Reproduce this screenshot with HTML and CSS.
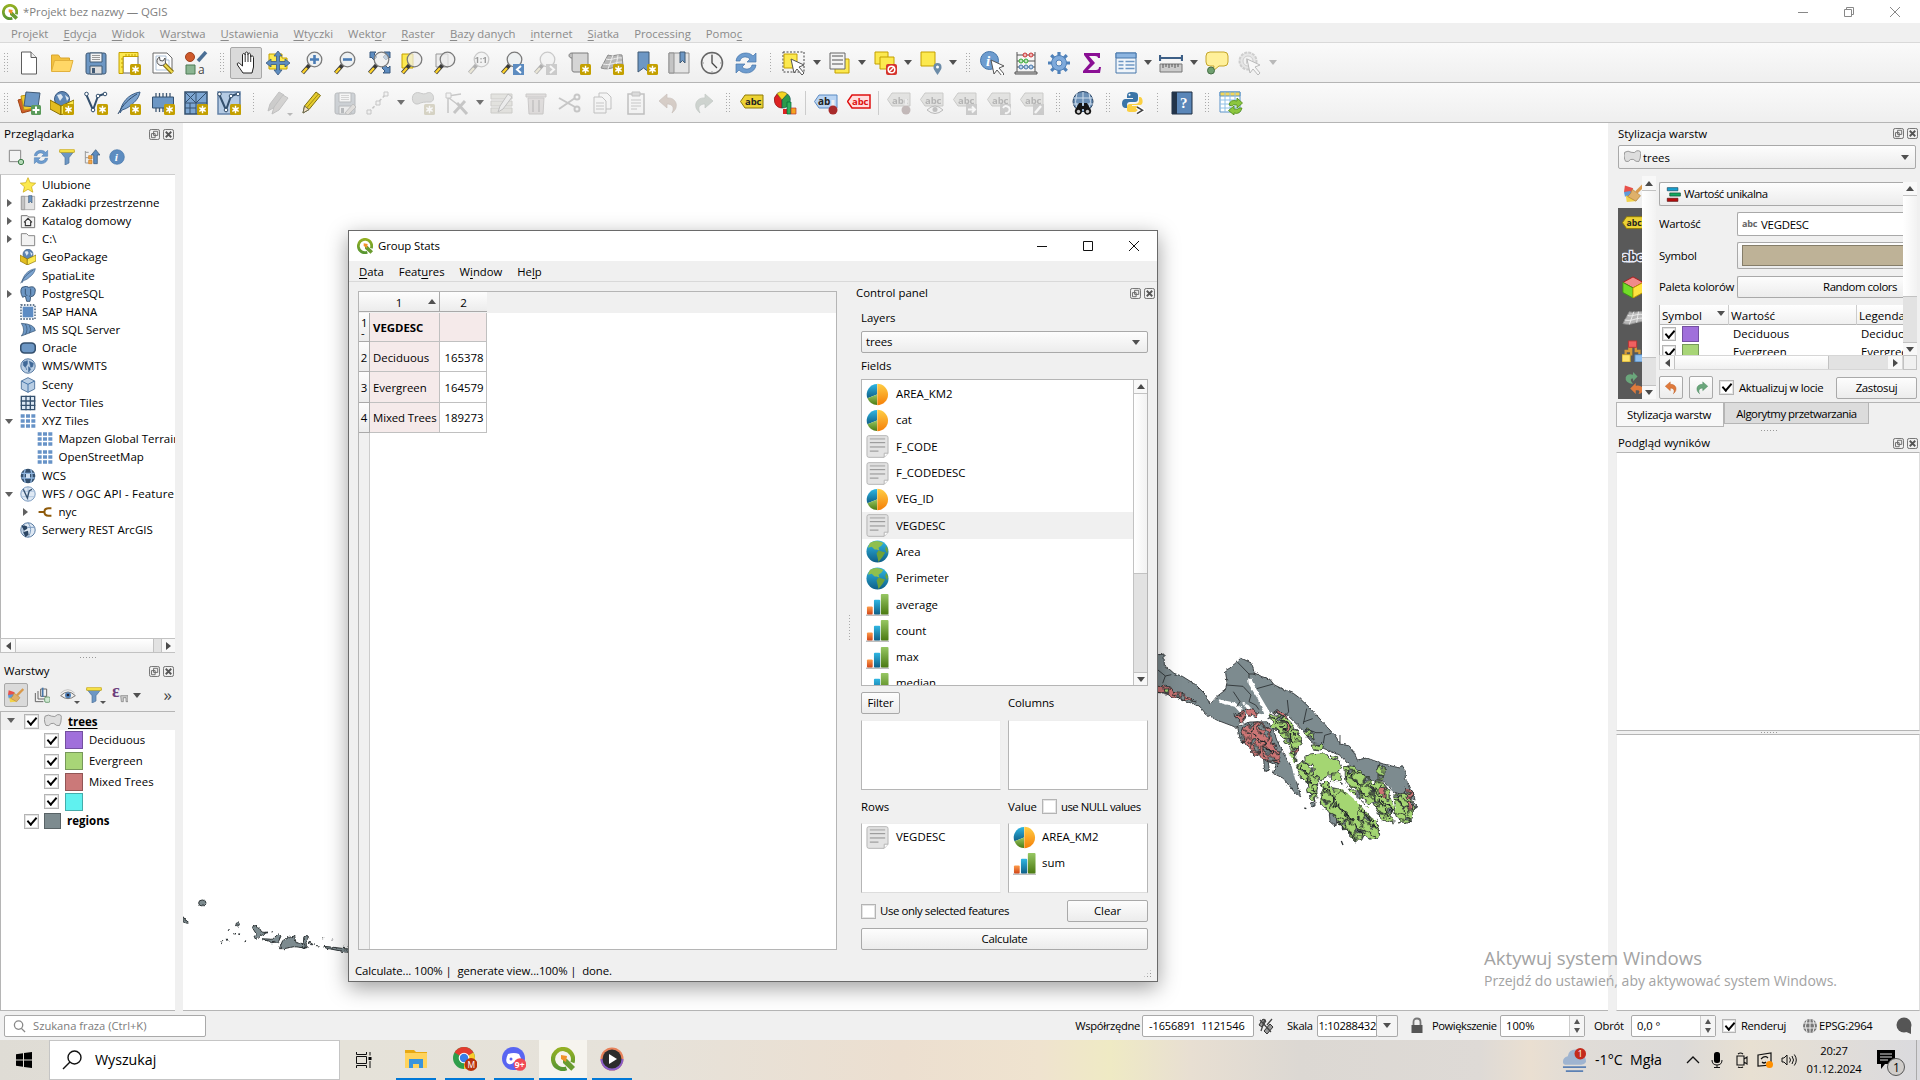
FILE: index.html
```html
<!DOCTYPE html>
<html lang="pl">
<head>
<meta charset="utf-8">
<title>*Projekt bez nazwy — QGIS</title>
<link rel="stylesheet" href="styles.css">
</head>
<body>
<svg class="defs" aria-hidden="true">
<defs>
<linearGradient id="gOr" x1="0" y1="0" x2="0" y2="1"><stop offset="0" stop-color="#ffce45"/><stop offset="1" stop-color="#f57f08"/></linearGradient>
<linearGradient id="gBl" x1="0" y1="0" x2="0" y2="1"><stop offset="0" stop-color="#2fb7e4"/><stop offset="1" stop-color="#0f5f87"/></linearGradient>
<linearGradient id="gGr" x1="0" y1="0" x2="0" y2="1"><stop offset="0" stop-color="#97c763"/><stop offset="1" stop-color="#4b7a12"/></linearGradient>
<linearGradient id="gRd" x1="0" y1="0" x2="0" y2="1"><stop offset="0" stop-color="#ff9d4a"/><stop offset="1" stop-color="#cf4418"/></linearGradient>
<linearGradient id="gQ" x1="0" y1="0" x2="0" y2="1"><stop offset="0" stop-color="#93b023"/><stop offset="1" stop-color="#589632"/></linearGradient>
<filter id="ragged" x="-5%" y="-5%" width="110%" height="110%"><feTurbulence type="fractalNoise" baseFrequency="0.1" numOctaves="2" seed="4"/><feDisplacementMap in="SourceGraphic" scale="10" xChannelSelector="R" yChannelSelector="G"/></filter>
<filter id="ragged2" x="-5%" y="-5%" width="110%" height="110%"><feTurbulence type="fractalNoise" baseFrequency="0.045" numOctaves="2" seed="9"/><feDisplacementMap in="SourceGraphic" scale="30" xChannelSelector="R" yChannelSelector="G"/></filter>
<pattern id="woods" width="46" height="42" patternUnits="userSpaceOnUse" patternTransform="rotate(28) scale(1.15)"><path d="M0 0h46v42H0z" fill="#a4d672"/><path d="M0 10l14-4 8 8 10-6 14 4M22 14l-3 14 9 14M0 30l19-2M33 8l3 18 10 6M36 26l-10 4" fill="none" stroke="#262c2c" stroke-width="3"/><path d="M20 14l9-2 2 7-8 3zM2 31l9 0-3 8z" fill="#7d8b8f" stroke="#262c2c" stroke-width="2"/></pattern>
<pattern id="mixed" width="42" height="38" patternUnits="userSpaceOnUse" patternTransform="rotate(35) scale(1.3)"><path d="M0 0h42v38H0z" fill="#cc7574"/><path d="M0 10l18-3 8 8 16-5M20 14l-2 24M26 15l4 14 12 2" fill="none" stroke="#262c2c" stroke-width="2.300"/><path d="M0 20l14 0 3 10-12 4zM26 15l12-3 0 10-8 2z" fill="#7d8b8f" stroke="#262c2c" stroke-width="2"/></pattern>
</defs>
</svg>
<svg class="symbols" aria-hidden="true">
<symbol id="badge" viewBox="0 0 24 24"><rect x="13" y="13" width="11" height="11" rx="1.5" fill="#c4a000"/><path d="M18.5 14.800v7.400M15.300 16.600l6.400 3.800M21.700 16.600l-6.400 3.800" stroke="#fff" stroke-width="1.400"/><circle cx="18.500" cy="18.500" r="1.900" fill="#fff"/></symbol>
<symbol id="mag" viewBox="0 0 24 24"><path d="M9.500 14L2.500 22" stroke="#3a3a3a" stroke-width="4"/><path d="M7 17L2.700 21.800" stroke="#fcd22b" stroke-width="2.400"/><circle cx="14.500" cy="8.500" r="7.300" fill="#eef1f2" stroke="#7b7b7b" stroke-width="1.300"/></symbol>
<symbol id="magc" viewBox="0 0 24 24"><path d="M9.500 14L2.500 22" stroke="#3a3a3a" stroke-width="4"/><path d="M7 17L2.700 21.800" stroke="#fcd22b" stroke-width="2.400"/><circle cx="14.500" cy="8.500" r="7.300" fill="#eee" fill-opacity=".7" stroke="#7b7b7b" stroke-width="1.300"/></symbol>
<symbol id="q" viewBox="0 0 24 24"><path d="M21.400 15.500A10 10 0 1 0 15.500 21.400" fill="none" stroke="url(#gQ)" stroke-width="4.200"/><path d="M12 12h4l8 8-3.700 3.700L12 16z" fill="#6a9c30"/><path d="M10 8l6 1-1 6-5-3z" fill="#f0932b"/></symbol>
<symbol id="new" viewBox="0 0 24 24"><path d="M4.500 1h9.500l5.500 5.500V23h-15z" fill="#fff" stroke="#5d5d5d"/><path d="M14 1v5.500h5.500" fill="#eee" stroke="#5d5d5d"/></symbol>
<symbol id="open" viewBox="0 0 24 24"><path d="M1.500 4h7l2 3h9v4H5L1.500 20z" fill="#f3c13e" stroke="#d9a52c"/><path d="M4.500 9.500h18.500l-3 11H1.500z" fill="#ffd766" stroke="#e2b13c"/></symbol>
<symbol id="save" viewBox="0 0 24 24"><rect x="2" y="2" width="20" height="21" rx="2" fill="#6d97c4" stroke="#415a75"/><path d="M6 2h12v9H6z" fill="#f4f4f4" stroke="#415a75"/><path d="M8 4.500h8M8 6.500h8M8 8.500h8" stroke="#999"/><path d="M6 15h12v8H6z" fill="#ddd" stroke="#415a75"/><path d="M8 17h3v5H8z" fill="#415a75"/></symbol>
<symbol id="layoutnew" viewBox="0 0 24 24"><path d="M6 5h15v17H6z" fill="#fff" stroke="#666"/><path d="M2 1.500h19v4H6v17H2z" fill="#fce94f" stroke="#c4a000"/><path d="M9 3v2M12 3v2M15 3v2M18 3v2M4 8h2M4 12h2M4 16h2" stroke="#c4a000"/><use href="#badge"/></symbol>
<symbol id="layoutmgr" viewBox="0 0 24 24"><path d="M2 2h14l5 5v15H2z" fill="#fff" stroke="#6a6a6a"/><path d="M5 5h10v4h3v10H5z" fill="none" stroke="#b0c3d8"/><path d="M13 13l8.500 8.500" stroke="#8c7410" stroke-width="4.500"/><path d="M13 13l8.500 8.500" stroke="#f0dc50" stroke-width="2"/><path d="M8.500 6a4.500 4.500 0 1 0 6 6l-.5-5-2 3-3-.5z" fill="#f0f0f0" stroke="#555"/></symbol>
<symbol id="style" viewBox="0 0 24 24"><circle cx="6" cy="6" r="4.500" fill="#cf5a2b" stroke="#9f4220"/><path d="M14 10l8-9" stroke="#4b6f95" stroke-width="3.500"/><path d="M2 14h9v9H2z" fill="#8bb592" stroke="#4c7a54"/><text x="14" y="23" font-size="12" font-family="Open Sans" fill="#444">a</text></symbol>
<symbol id="hand" viewBox="0 0 24 24"><path d="M7.500 22L2 14c-1-2 1-2.800 2.200-1.500L7 15V4c0-2 2.500-2 2.700 0V2.500c.2-2 2.500-2 2.700 0V3.500c.3-2 2.600-1.800 2.700.3V6c.5-1.700 2.900-1.500 2.900.5V16l-1.500 6z" transform="translate(1.500 0)" fill="#fff" stroke="#222"/><path d="M11.200 4v7M14 3v8M16.700 4v7" stroke="#333"/></symbol>
<symbol id="pan" viewBox="0 0 24 24"><path d="M3 3h13v4h5v11H3z" fill="#fce94f" stroke="#c4a000"/><path d="M12 0l4 5h-2.500v5.500H19V8l5 4-5 4v-2.500h-5.500V19H16l-4 5-4-5h2.500v-5.500H5V16l-5-4 5-4v2.500h5.500V5H8z" fill="#5d8cc0" stroke="#3b5a80" stroke-width=".8"/></symbol>
<symbol id="zin" viewBox="0 0 24 24"><use href="#mag"/><path d="M14.500 4v9M10 8.500h9" stroke="#4a7cb5" stroke-width="2.600"/></symbol>
<symbol id="zout" viewBox="0 0 24 24"><use href="#mag"/><path d="M10 8.500h9" stroke="#4a7cb5" stroke-width="2.600"/></symbol>
<symbol id="zfull" viewBox="0 0 24 24"><path d="M3 1h6L7 3l3 3-3 3-3-3-1 1zM23 1h-6l2 2-3 3 3 3 3-3 1 1zM23 22h-7l2-2-3-3 3-3 3 3 2-2z" fill="#5d8cc0" stroke="#3b5a80"/><use href="#magc"/></symbol>
<symbol id="zsel" viewBox="0 0 24 24"><path d="M2 3h11v14H2z" fill="#fce94f" stroke="#c4a000"/><use href="#magc"/></symbol>
<symbol id="zlay" viewBox="0 0 24 24"><path d="M3 3h12v13H3z" fill="#ececec" stroke="#999"/><use href="#magc"/></symbol>
<symbol id="znat" viewBox="0 0 24 24"><use href="#mag"/><text x="7.500" y="12" font-size="9" font-weight="700" font-family="Open Sans">1:1</text></symbol>
<symbol id="zlast" viewBox="0 0 24 24"><use href="#mag"/><path d="M13 13h11v11H13z" fill="#5d8cc0"/><path d="M21 15l-4 3.500 4 3.500" fill="none" stroke="#fff" stroke-width="2"/></symbol>
<symbol id="znext" viewBox="0 0 24 24"><use href="#mag"/><path d="M13 13h11v11H13z" fill="#888"/><path d="M17 15l4 3.500-4 3.500" fill="none" stroke="#fff" stroke-width="2"/></symbol>
<symbol id="map2" viewBox="0 0 24 24"><path d="M5 2h16v19H7c-2 0-2-2-2-3z" fill="#d5d5d5" stroke="#7c7c7c"/><path d="M5 2C1 2 1 7 5 7" fill="#bbb" stroke="#7c7c7c"/><use href="#badge"/></symbol>
<symbol id="map3p" viewBox="0 0 24 24"><path d="M8 4c5 2 9-1 14 0l1 11c-7-1-13 5-22 2z" fill="#b8b8b8" stroke="#8c8c8c"/><path d="M6 8c5 2 10-2 16-1M3 13c7 2 11-2 19-2M13 4L8 18M18 4l-2 12" stroke="#eee" fill="none"/></symbol>
<symbol id="map3" viewBox="0 0 24 24"><use href="#map3p"/><use href="#badge"/></symbol>
<symbol id="bmark" viewBox="0 0 24 24"><path d="M4 1h11v20l-5.500-4L4 21z" fill="#6d97c4" stroke="#415a75"/><use href="#badge"/></symbol>
<symbol id="book" viewBox="0 0 24 24"><path d="M2 2h20v20H2z" fill="#e4e4e4" stroke="#919191"/><path d="M2 2h5v20H2z" fill="#c4c4c4" stroke="#919191"/><path d="M13 1h5v11l-2.500-2.500L13 12z" fill="#6d97c4" stroke="#415a75"/></symbol>
<symbol id="clock" viewBox="0 0 24 24"><circle cx="12" cy="12" r="10.500" fill="#f2f2f2" stroke="#666" stroke-width="1.500"/><path d="M12 4v8l5 5" fill="none" stroke="#444" stroke-width="1.300"/><path d="M12 2v2M12 20v2M2 12h2M20 12h2" stroke="#999"/></symbol>
<symbol id="refresh" viewBox="0 0 24 24"><path d="M2 10c1-9 13-10 17-5l3-3v9h-9l3-3C13 5 7 5 6 10zM22 14c-1 9-13 10-17 5l-3 3v-9h9l-3 3c3 3 9 3 10-2z" fill="#6d9ccf" stroke="#4676aa" stroke-width=".7"/></symbol>
<symbol id="sel" viewBox="0 0 24 24"><path d="M1 1h21v20H1z" fill="none" stroke="#444" stroke-dasharray="2 1.500"/><path d="M2 3h13v14H2z" fill="#fce94f" stroke="#c4a000"/></symbol>
<symbol id="cursor" viewBox="0 0 24 24"><path d="M9 8l13 6-5 2 5 6-2 2-5-6-3 4z" fill="#fff" stroke="#555"/></symbol>
<symbol id="selarrow" viewBox="0 0 24 24"><use href="#sel"/><use href="#cursor"/></symbol>
<symbol id="selform" viewBox="0 0 24 24"><path d="M7 8h14v14H7z" fill="#fce94f" stroke="#c4a000"/><path d="M2 2h15v16H2z" fill="#f3f3f3" stroke="#666"/><path d="M4 5h11M4 9h11M4 13h11" stroke="#888" stroke-width="1.500"/></symbol>
<symbol id="desel" viewBox="0 0 24 24"><path d="M2 1h13v12H2z" fill="#fce94f" stroke="#c4a000"/><path d="M7 6h14v12H7z" fill="#fce94f" stroke="#c4a000"/><rect x="13" y="13" width="11" height="11" rx="2" fill="#d6332c"/><circle cx="18.500" cy="18.500" r="3.300" fill="none" stroke="#fff" stroke-width="1.500"/><path d="M16 21l5-5" stroke="#fff" stroke-width="1.500"/></symbol>
<symbol id="selloc" viewBox="0 0 24 24"><path d="M2 1h14v14H2z" fill="#fce94f" stroke="#c4a000"/><path d="M18.500 24c-4-6-4-6-4-8a4 4 0 0 1 8 0c0 2 0 2-4 8z" fill="#6c8ca8"/><circle cx="18.500" cy="16" r="1.500" fill="#fff"/></symbol>
<symbol id="ident" viewBox="0 0 24 24"><circle cx="9.500" cy="9.500" r="9" fill="#6d9ccf" stroke="#4676aa"/><text x="6" y="15" font-size="15" font-style="italic" font-weight="700" font-family="Liberation Serif" fill="#fff">i</text><g transform="translate(2 1)"><use href="#cursor"/></g></symbol>
<symbol id="abacus" viewBox="0 0 24 24"><path d="M3 1v20M21 1v20M1 21h22v2H1zM3 4h18M3 10h18M3 16h18" fill="#ccc" stroke="#555"/><g stroke-width="1" fill="#f1b6b6" stroke="#c33"><circle cx="11" cy="4" r="2"/><circle cx="17" cy="4" r="2"/></g><g fill="#bfe3bf" stroke="#3a3"><circle cx="7" cy="10" r="2"/><circle cx="12" cy="10" r="2"/></g><g fill="#bcd4ee" stroke="#4676aa"><circle cx="7" cy="16" r="2"/><circle cx="12" cy="16" r="2"/><circle cx="17" cy="16" r="2"/></g></symbol>
<symbol id="gear" viewBox="0 0 24 24"><g stroke="#4f81b9" stroke-width="3.200"><path d="M12 1v22M1 12h22M4.200 4.200l15.600 15.600M19.800 4.200L4.200 19.800"/></g><circle cx="12" cy="12" r="7.500" fill="#7faadb" stroke="#4f81b9"/><circle cx="12" cy="12" r="3" fill="#f2f2f2" stroke="#4f81b9"/></symbol>
<symbol id="sigma" viewBox="0 0 24 24"><path d="M4 2h16v5h-2q0-2-3-2H9l6 7-7 7h8q3 0 3-3h2l-1 6H3v-2l7-8-6-8z" fill="#8a0f94"/></symbol>
<symbol id="table" viewBox="0 0 24 24"><path d="M2 2h20v20H2z" fill="#f0f5fa" stroke="#4676aa"/><path d="M2 2h20v5H2z" fill="#8db5e0" stroke="#4676aa"/><path d="M4.500 10.500h5M11.500 10.500h9M4.500 14h5M11.500 14h9M4.500 17.500h5M11.500 17.500h9" stroke="#6d97c4" stroke-width="1.500"/></symbol>
<symbol id="measure" viewBox="0 0 24 24"><path d="M1 7h22M1 4v6M23 4v6" stroke="#3d5f86" stroke-width="2.200"/><path d="M1 13h22v8H1z" fill="#ccc" stroke="#777"/><path d="M4 13v4M7 13v3M10 13v4M13 13v3M16 13v4M19 13v3" stroke="#555"/></symbol>
<symbol id="tip" viewBox="0 0 24 24"><path d="M5 1h14q4 0 4 4v6q0 4-4 4h-5l-6 5 1-5H5q-4 0-4-4V5q0-4 4-4z" fill="#fff09a" stroke="#c4a52a"/><circle cx="6" cy="19.500" r="3.500" fill="#6fa06f" stroke="#456e45"/></symbol>
<symbol id="gearrun" viewBox="0 0 24 24"><circle cx="10" cy="10" r="8.500" fill="#ccc" stroke="#888" stroke-width="2" stroke-dasharray="3 1"/><circle cx="10" cy="10" r="5" fill="#eee" stroke="#888"/><path d="M8 7l5 3-5 3z" fill="#888"/><use href="#cursor"/></symbol>
<symbol id="addlay" viewBox="0 0 24 24"><path d="M1 9l11-3 4 13-11 3z" fill="#d0602c" stroke="#a04312"/><path d="M4 5l12-2 2 14-11 2z" fill="#f2cb30" stroke="#b99312"/><path d="M9 1l14 1-2 14-14-1z" fill="#6d97c4" stroke="#415a75"/><rect x="14" y="14" width="10" height="10" rx="1.500" fill="#5a9a5a"/><path d="M19 15.500v7M15.500 19h7" stroke="#fff" stroke-width="2"/></symbol>
<symbol id="gpkg" viewBox="0 0 24 24"><circle cx="12" cy="8" r="7.500" fill="#5d86b5" stroke="#3b5a80"/><path d="M7 4l4-1 2 3-3 4zM15 4l4 3-2 3z" fill="#dfe9f3"/><path d="M0 9l11 6v9L0 18z" fill="#e3bd20" stroke="#8a7000"/><path d="M24 9l-13 6v9l13-6z" fill="#fce94f" stroke="#8a7000"/></symbol>
<symbol id="gpkgn" viewBox="0 0 24 24"><use href="#gpkg"/><use href="#badge"/></symbol>
<symbol id="shp" viewBox="0 0 24 24"><path d="M2 3l7 16 5-14 6-2" fill="none" stroke="#34506e" stroke-width="2"/><g fill="#fff" stroke="#34506e"><circle cx="2.500" cy="3" r="1.800"/><circle cx="9" cy="19" r="1.800"/><circle cx="14" cy="5" r="1.800"/><circle cx="21" cy="3" r="1.800"/></g></symbol>
<symbol id="shpn" viewBox="0 0 24 24"><use href="#shp"/><use href="#badge"/></symbol>
<symbol id="feather" viewBox="0 0 24 24"><path d="M3 22C4 12 11 3 23 1c-1 6-5 10-9 13-3 3-6 4-9 5z" fill="#7ba3cf" stroke="#3d5f86"/><path d="M1 23C6 13 12 8 20 3" fill="none" stroke="#2f4b6b"/></symbol>
<symbol id="feathern" viewBox="0 0 24 24"><use href="#feather"/><use href="#badge"/></symbol>
<symbol id="chipn" viewBox="0 0 24 24"><path d="M5 2v19M8.500 2v19M12 2v19M15.500 2v19M19 2v19" stroke="#415a75" stroke-width="1.300"/><path d="M1.500 6h21v11h-21z" fill="#6d97c4" stroke="#34506e"/><use href="#badge"/></symbol>
<symbol id="meshn" viewBox="0 0 24 24"><path d="M1 1h22v22H1z" fill="#7da6d2" stroke="#34506e" stroke-width="1.500"/><path d="M1 12h22M12 1v22M1 1l11 11M12 1L1 12M12 12l11-11M6 12v11M1 17h11" stroke="#34506e"/><use href="#badge"/></symbol>
<symbol id="virtn" viewBox="0 0 24 24"><path d="M1 1h22v22H1z" fill="#b5cbe4" stroke="#6482a6" stroke-width="1.500"/><use href="#shp"/><use href="#badge"/></symbol>
<symbol id="pencil" viewBox="0 0 24 24"><path d="M4 22l1.500-7L17 1l4.500 3.500L10 18.500z" fill="#e6cc2e" stroke="#7d6e10"/><path d="M5.500 15l4.500 3.500-6 3.500z" fill="#f1dfc0" stroke="#665"/><path d="M7.500 17L19.500 3" stroke="#a18c10"/></symbol>
<symbol id="pencils" viewBox="0 0 24 24"><path d="M2 20l2-7L13 1l5 3-9 12z" fill="#8a8680" stroke="#666"/><path d="M6 23l2-7L17 4l5 3-9 12z" fill="#a3968c" stroke="#666"/></symbol>
<symbol id="saveed" viewBox="0 0 24 24"><use href="#save"/><path d="M12 22l8-9 3 3-8 8z" fill="#c9b8a0" stroke="#666"/></symbol>
<symbol id="digline" viewBox="0 0 24 24"><path d="M3 21L20 3" stroke="#777" stroke-width="1.500" stroke-dasharray="3 2"/><path d="M1 19h4v4H1zM10 10h4v4h-4zM18 1h4v4h-4z" fill="#eee" stroke="#777"/></symbol>
<symbol id="blob" viewBox="0 0 24 24"><path d="M3 3c5-4 8 2 13-1 7-3 9 9 3 9-5 0-8 0-12 2-6 1-7-7-4-10z" fill="#a9b2a5" stroke="#777"/><use href="#badge"/></symbol>
<symbol id="tools" viewBox="0 0 24 24"><path d="M3 22V6M3 5l13-2M4 7l8 6" stroke="#777" stroke-width="1.500"/><path d="M1 2h5v5H1z" fill="#eee" stroke="#777"/><path d="M9 22L20 10M12 12l10 11" stroke="#777" stroke-width="3"/></symbol>
<symbol id="attred" viewBox="0 0 24 24"><path d="M1 3h21v5H1zM1 10h21v5H1zM1 17h21v5H1z" fill="#c9c49f" stroke="#8d8a6a"/><path d="M8 21l2-6L18 3l4 3-9 12z" fill="#ddd" stroke="#666"/></symbol>
<symbol id="trash" viewBox="0 0 24 24"><path d="M4 7h16l-1 16H5zM2 3h20v3H2z" fill="#c9aeab" stroke="#8d7876"/><path d="M9 9v12M15 9v12" stroke="#8d7876" stroke-width="2"/></symbol>
<symbol id="cut" viewBox="0 0 24 24"><path d="M2 7l16 9M2 18L18 7" stroke="#777" stroke-width="2"/><g fill="none" stroke="#777" stroke-width="2"><circle cx="20" cy="6" r="2.500"/><circle cx="20" cy="18" r="2.500"/></g></symbol>
<symbol id="copy" viewBox="0 0 24 24"><path d="M9 2h8l4 4v12H9z" fill="#f4f4f4" stroke="#666"/><path d="M4 6h8l4 4v12H4z" fill="#f4f4f4" stroke="#666"/><path d="M6 12h8M6 15h8M6 18h8" stroke="#777"/></symbol>
<symbol id="paste" viewBox="0 0 24 24"><path d="M4 3h16v20H4z" fill="#f4f4f4" stroke="#666" stroke-width="1.500"/><path d="M8 1h8v4H8z" fill="#aaa" stroke="#666"/><path d="M7 9h10M7 12h10M7 15h10M7 18h6" stroke="#777"/></symbol>
<symbol id="undo" viewBox="0 0 24 24"><path d="M2 10l8-7v4c9-1 13 9 5 15 3-6 0-9-5-9v4z" fill="#e07a3c" stroke="#b85a20" stroke-width=".7"/></symbol>
<symbol id="redo" viewBox="0 0 24 24"><path d="M22 10l-8-7v4c-9-1-13 9-5 15-3-6 0-9 5-9v4z" fill="#6aa67b" stroke="#45845a" stroke-width=".7"/></symbol>
<symbol id="tagy" viewBox="0 0 24 24"><path d="M5 4h18v13H5l-4.500-6.500z" fill="#ecd234" stroke="#8e7a08"/><text x="5" y="14.200" font-size="9.500" font-weight="700" font-family="Open Sans" textLength="16.500" fill="#222">abc</text></symbol>
<symbol id="tagr" viewBox="0 0 24 24"><path d="M5 4h18v13H5l-4.500-6.500z" fill="#ffdede" stroke="#e01010" stroke-width="1.500"/><text x="5" y="14.200" font-size="9.500" font-weight="700" font-family="Open Sans" textLength="16.500" fill="#e01010">abc</text></symbol>
<symbol id="tagb" viewBox="0 0 24 24"><path d="M5 4h18v13H5l-4.500-6.500z" fill="#b9d4f3" stroke="#5b8ac2"/><text x="4" y="14.200" font-size="10" font-weight="700" font-family="Open Sans" fill="#222">ab</text><path d="M19 9v10" stroke="#eee" stroke-width="3"/><circle cx="19" cy="19" r="4.500" fill="#a82a2a"/></symbol>
<symbol id="tagg" viewBox="0 0 24 24"><path d="M5 2h18v13H5L.5 8.500z" fill="#c2c2b0" stroke="#7e7e70"/><text x="5" y="12.500" font-size="9.500" font-weight="700" font-family="Open Sans" textLength="16.500" fill="#444">abc</text></symbol>
<symbol id="tg1" viewBox="0 0 24 24"><use href="#tagg"/><path d="M19 8v10" stroke="#ddd" stroke-width="3"/><circle cx="19" cy="19" r="4.500" fill="#a44"/></symbol>
<symbol id="eye" viewBox="0 0 24 24"><path d="M1 13Q12 2 23 13Q12 22 1 13z" fill="#eee" stroke="#777" stroke-width="1.500"/><circle cx="12" cy="12.500" r="4.500" fill="#4f81b9"/><circle cx="12" cy="12" r="2" fill="#223"/><path d="M1 9Q12-1 22 9" fill="none" stroke="#aaa"/></symbol>
<symbol id="tg2" viewBox="0 0 24 24"><use href="#tagg"/><path d="M7 19q8-8 16 0-8 7-16 0z" fill="#eee" stroke="#555"/><circle cx="15" cy="18.500" r="2.500" fill="#666"/></symbol>
<symbol id="tg3" viewBox="0 0 24 24"><use href="#tagg"/><path d="M13 13h11v11H13z" fill="#888"/><path d="M15 18.500h7M19 15.500l3 3-3 3" fill="none" stroke="#fff" stroke-width="2"/></symbol>
<symbol id="tg4" viewBox="0 0 24 24"><use href="#tagg"/><path d="M13 13h11v11H13z" fill="#888"/><path d="M16 17a3.500 3.500 0 1 1 2 5" fill="none" stroke="#fff" stroke-width="2"/></symbol>
<symbol id="tg5" viewBox="0 0 24 24"><use href="#tagg"/><path d="M13 13h11v11H13z" fill="#888"/><path d="M15 22l6-7" stroke="#fff" stroke-width="2.500"/></symbol>
<symbol id="diag" viewBox="0 0 24 24"><path d="M9 9V17A8 8 0 0 1 4 3z" fill="#d22" stroke="#811" stroke-width=".7"/><path d="M9 9L4 2.500A8 8 0 0 1 14.500 3z" fill="#f4d420" stroke="#7d6e10" stroke-width=".7"/><path d="M9 9l5.500-6A8 8 0 0 1 9 17z" fill="#2a9a4a" stroke="#155" stroke-width=".7"/><path d="M10 18h4v5h-4z" fill="#d22"/><path d="M14 11h4v12h-4z" fill="#2fae5a" stroke="#063" stroke-width=".7"/><path d="M18 17h5v6h-5z" fill="#f4a420" stroke="#b33" stroke-width=".7"/></symbol>
<symbol id="meta" viewBox="0 0 24 24"><circle cx="12" cy="10.500" r="10" fill="#6b8fb5" stroke="#2b4563"/><path d="M2 7h20M2 13h20M12 1v19M6 2q-3 9 0 16M18 2q3 9 0 16" stroke="#cfdeed" fill="none"/><path d="M8 12h3v3h2v-3h3l4 7a3.500 3.500 0 1 1-7 2v-3h-2v3a3.500 3.500 0 1 1-7-2z" fill="#151515"/><circle cx="7.500" cy="20.500" r="1.700" fill="#ccc"/><circle cx="16.500" cy="20.500" r="1.700" fill="#ccc"/></symbol>
<symbol id="py" viewBox="0 0 24 24"><path d="M11 1c-5 0-5 2-5 6h6v1H4c-4 0-4 9 0 9h2v-3c0-2 1-3 3-3h5c2 0 3-1 3-3V4c0-2-2-3-6-3z" fill="#3b75a8"/><path d="M12 21c5 0 5-2 5-6h-6v-1h8c4 0 3-8 0-8h-1v4c0 2-2 3-4 3H9c-2 0-3 1-3 3v3c0 2 2 2 6 2z" fill="#fbd043"/><circle cx="8.500" cy="3.800" r="1" fill="#fff"/><path d="M16 16l5.500 3.200-5.500 3.500" fill="none" stroke="#fff" stroke-width="4"/><path d="M16 16l5.500 3.200-5.500 3.500" fill="none" stroke="#444" stroke-width="1.500"/></symbol>
<symbol id="help" viewBox="0 0 24 24"><path d="M2 1h20v22H2z" fill="#5a86b8" stroke="#1f2f42"/><path d="M2 1h5v22H2z" fill="#22344a"/><text x="10" y="17" font-size="15" font-family="Liberation Serif" font-weight="700" fill="#fff">?</text></symbol>
<symbol id="reload" viewBox="0 0 24 24"><path d="M1 1h20v20H1z" fill="#fff" stroke="#5a93c8"/><path d="M1 1h20v4H1z" fill="#f2d65a" stroke="#5a93c8"/><path d="M1 9h20M1 13h20M1 17h20M6 1v20M11 1v20M16 1v20" stroke="#8fc0e6"/><path d="M10 14q1-6 8-4V7l5.500 5-5.500 5v-3q-4-1-5 1zM23 17q-2 7-8 5v2l-5.500-4.500L15 15v3q4 1 5-1z" fill="#8cc63e" stroke="#4d8a12" stroke-width=".8"/></symbol>
<symbol id="brush" viewBox="0 0 24 24"><path d="M1 5l9 3-3 6-7-2z" fill="#e8504a"/><path d="M0 12l7-1 3 7-9-1z" fill="#5f9ad8"/><path d="M2 16l9 1 1 5-9 1z" fill="#f2d34a"/><path d="M9 9l9 7-5 6-9-5q4-3 5-8z" fill="#dfb06a" stroke="#a87830" stroke-width=".7"/><path d="M13.500 12.500L23 3" stroke="#d9994a" stroke-width="3.500"/></symbol>
<symbol id="star" viewBox="0 0 24 24"><path d="M12 1l3.300 7.500 8.200.8-6.200 5.400 1.900 8.100L12 18.500l-7.200 4.300 1.900-8.100L.5 9.300l8.200-.8z" fill="#fce94f" stroke="#c4a000"/></symbol>
<symbol id="home" viewBox="0 0 24 24"><path d="M2 4h9l2 2h9v16H2z" fill="#f4f4f4" stroke="#777" stroke-width="1.500"/><path d="M6 14l6-6 6 6M8 13v6h8v-6" fill="none" stroke="#333" stroke-width="1.700"/></symbol>
<symbol id="folder" viewBox="0 0 24 24"><path d="M2 4h8l3 3h9v15H2z" fill="#f2f2f2" stroke="#888" stroke-width="1.500"/></symbol>
<symbol id="pg" viewBox="0 0 24 24"><path d="M3 2q8-3 10 0 9-3 10 4 0 6-3 9l-4 1-1 7h-5l-2-8-4 2Q-1 8 3 2z" fill="#6d97c4" stroke="#2f4b6b" stroke-width="1.300"/><path d="M8 4v8l3 3M16 4v9l-2 3" fill="none" stroke="#2f4b6b" stroke-width="1.300"/></symbol>
<symbol id="hana" viewBox="0 0 24 24"><path d="M1.500 1.500h21v21h-21z" fill="none" stroke="#34506e" stroke-width="2" stroke-dasharray="2.400 2"/><path d="M4 4h16v16H4z" fill="#5d8cc4"/></symbol>
<symbol id="mssql" viewBox="0 0 24 24"><path d="M2 2q20 1 21 11l-21 8q7-8 0-19z" fill="#6d97c4" stroke="#34506e"/><path d="M8 3q5 8 0 16M14 5q4 6 0 12" fill="none" stroke="#34506e"/></symbol>
<symbol id="ora" viewBox="0 0 24 24"><rect x="1" y="4.500" width="22" height="15" rx="6" fill="#6d97c4" stroke="#34506e" stroke-width="2.500"/></symbol>
<symbol id="globe" viewBox="0 0 24 24"><circle cx="12" cy="12" r="10.800" fill="#b9cee4" stroke="#5a7ca3" stroke-width="1.500"/><path d="M5 6l6-2v5l-3 5-3-3zM14 5l6 3-1 5-3 1zM13 13l3 4-3 4zM9 14l1 4" fill="#3f6897" stroke="#3f6897"/></symbol>
<symbol id="wcs" viewBox="0 0 24 24"><circle cx="12" cy="12" r="11" fill="#34506e"/><path d="M2 8h20M2 15h20M8 2q-4 10 0 20M16 2q4 10 0 20" fill="none" stroke="#8fb4dd" stroke-width="2"/><path d="M9 9h6v6H9z" fill="#cfe0f2"/></symbol>
<symbol id="wfs" viewBox="0 0 24 24"><circle cx="12" cy="12" r="10.800" fill="#dfe9f4" stroke="#7d9cc0" stroke-width="1.500"/><path d="M2 8h20M2 16h20M12 1v22" stroke="#9bb7d6"/><path d="M5 5l6 13 3-11 4-2" fill="none" stroke="#34506e" stroke-width="2"/></symbol>
<symbol id="arc" viewBox="0 0 24 24"><circle cx="12" cy="12" r="10.800" fill="#dfe9f4" stroke="#5a7ca3" stroke-width="1.500"/><path d="M2 8h20M12 1q8 10 0 22M7 4q-5 8 0 16" stroke="#7d9cc0" fill="none" stroke-width="1.500"/><path d="M2 5l8 1 1 4-5 3zM5 15l7-2 1 6-5 4z" fill="#2b4563"/></symbol>
<symbol id="cube" viewBox="0 0 24 24"><path d="M12 1l10 5v12l-10 5-10-5V6z" fill="#b9cee4" stroke="#5a7ca3" stroke-width="1.500"/><path d="M2 6l10 5 10-5M12 11v12" stroke="#4676aa" stroke-width="1.500" fill="none"/></symbol>
<symbol id="vtile" viewBox="0 0 24 24"><path d="M2 2h20v20H2z" fill="#dce8f4" stroke="#34506e" stroke-width="2"/><path d="M9 1v22M15.500 1v22M1 9h22M1 15.500h22" stroke="#34506e" stroke-width="2"/></symbol>
<symbol id="xyz" viewBox="0 0 24 24"><path d="M1 4.500h22M1 12h22M1 19.500h22" stroke="#6793c7" stroke-width="5.500" stroke-dasharray="6 2"/></symbol>
<symbol id="nyc" viewBox="0 0 24 24"><path d="M1 12h10M23 5.500h-5q-7 0-7 6.500t7 6.500h5" fill="none" stroke="#8f5a0a" stroke-width="3.500"/></symbol>
<symbol id="poly" viewBox="0 0 24 18"><path d="M1 3q5-3 9 0 5 2 8-2 6-1 5.500 4 0 7-2.500 11-4 1-8-3-4-1-7 3-5 1-5-3-2-5 0-10z" fill="#dedede" stroke="#8c8c8c" stroke-width="1.200"/></symbol>
<symbol id="addb" viewBox="0 0 24 24"><path d="M2 2h17v17H2z" fill="#f4f4f4" stroke="#888" stroke-width="1.500"/><circle cx="19.500" cy="19.500" r="4" fill="#b5d9b8" stroke="#3f7d49" stroke-width="1.500"/></symbol>
<symbol id="filt" viewBox="0 0 24 24"><path d="M1 3h22l-8 10v8l-6 3V13z" fill="#6d97c4" stroke="#4c6f99"/><path d="M1 1h22v4H1z" fill="#fce94f" stroke="#c4a000"/></symbol>
<symbol id="collapse" viewBox="0 0 24 24"><path d="M2 3v18h5M2 5h5M2 13h5" stroke="#999" fill="none" stroke-width="1.500"/><path d="M7 10h5v5H7zM7 17h5v5H7z" fill="#f3a74a" stroke="#c87a1a"/><path d="M14.500 22V9H11l6.500-8L24 9h-4v13z" fill="#5d8cc0" stroke="#34506e"/></symbol>
<symbol id="info" viewBox="0 0 24 24"><circle cx="12" cy="12" r="11" fill="#5d8cc0" stroke="#4676aa"/><text x="8.500" y="18" font-size="17" font-style="italic" font-weight="700" font-family="Liberation Serif" fill="#fff">i</text></symbol>
<symbol id="addgrp" viewBox="0 0 24 24"><path d="M2 9v13h12M6 6v12h10M10 3h9v11h-9z" fill="none" stroke="#666" stroke-width="1.500"/><path d="M13 1v14" stroke="#4676aa" stroke-width="2.500"/><rect x="16" y="15" width="8" height="8" rx="2" fill="#cfe8d2" stroke="#3f7d49"/></symbol>
<symbol id="eps" viewBox="0 0 24 24"><text x="0" y="15" font-size="27" font-family="Liberation Serif" font-weight="700" fill="#6d3f7d">ε</text><path d="M13 13h11v9h-3v-6h-4v6h-3z" fill="#ccc" stroke="#777"/></symbol>
<symbol id="pie" viewBox="0 0 24 24"><path d="M11.500 12V1A11 11 0 0 0 1.500 16z" fill="url(#gBl)"/><path d="M11.500 12L1.500 16q3 7 10 7z" fill="url(#gGr)"/><path d="M11.800.8a11.200 11.200 0 0 1 0 22.400z" fill="url(#gOr)"/></symbol>
<symbol id="doc" viewBox="0 0 24 24"><path d="M3 .700h18q2 0 2 2V19l-4 4.300H3q-2 0-2-2V2.700q0-2 2-2z" fill="#e3e3e3" stroke="#b3b3b3"/><path d="M4 4h16" stroke="#bdbdbd" stroke-width="2"/><path d="M4 8h16M4 12.500h16M4 16.800h9" stroke="#8b8b8b"/><path d="M19 23v-4h4" fill="#fff" stroke="#b3b3b3"/></symbol>
<symbol id="earth" viewBox="0 0 24 24"><circle cx="12" cy="12" r="11.500" fill="url(#gBl)"/><path d="M4 3q7-4 14 0l-2 3-3 2 1 3-3-1-2 0-3-3-4 1z" fill="#8fbf4f"/><path d="M13 11l7 2-3 5-4 5-1-5-1-4zM21 6l2 4-1 4-2-4z" fill="#6fa238"/></symbol>
<symbol id="bars" viewBox="0 0 24 24"><path d="M0 23.200h24" stroke="#bbb" stroke-width="1.500"/><rect x="1" y="14" width="6" height="8.500" rx="1" fill="url(#gRd)"/><rect x="8.300" y="7" width="6.500" height="15.500" rx="1" fill="url(#gBl)"/><rect x="15.500" y="1" width="8" height="21.500" rx="1" fill="url(#gGr)"/></symbol>
<symbol id="uniq" viewBox="0 0 24 24"><path d="M2 1h17v5H2z" fill="#19a0d0" stroke="#0d3f55"/><path d="M6 9.500h17v5H6z" fill="#14a860" stroke="#07432a"/><path d="M2 18h17v5H2z" fill="#b80c0c" stroke="#4b0606"/></symbol>
<symbol id="masks" viewBox="0 0 24 24"><text x="0" y="17" font-size="13" font-weight="700" font-family="Open Sans" fill="#444" stroke="#e7eaf8" stroke-width="3" paint-order="stroke">abc</text></symbol>
<symbol id="cube3" viewBox="0 0 24 24"><path d="M12 1l11 6-11 6L1 7z" fill="#f08a8a" stroke="#b01818"/><path d="M1 7l11 6v11L1 18z" fill="#73dc28" stroke="#3a9a10"/><path d="M23 7l-11 6v11l11-6z" fill="#ffe340" stroke="#c09a00"/></symbol>
<symbol id="tree3" viewBox="0 0 24 24"><path d="M8 7v5H4v5M15 7v5h4v5M10 8v9" stroke="#d59a3a" stroke-width="2.500" fill="none"/><path d="M7 1h9v7H7z" fill="#f06060" stroke="#b33"/><path d="M0 16h9v8H0z" fill="#ffe36a" stroke="#c49a20"/><path d="M14 16h9v8h-9z" fill="#8fc0f0" stroke="#4676aa"/></symbol>
<symbol id="hist" viewBox="0 0 24 24"><path d="M12 13q-9-1-8-7 2-5 8-3v-3l5 5-5 5V7q-5 0 0 6z" fill="#6aa67b"/><path d="M9 18l6-6v3q7-1 8 4-1 5-5 5 3-5-3-4v4z" fill="#e07a3c"/></symbol>
<symbol id="tri" viewBox="0 0 10 6"><path d="M0 0h10L5 6z" fill="#505050"/></symbol>
<symbol id="float" viewBox="0 0 12 12"><rect x=".5" y=".5" width="11" height="11" rx="2" fill="none" stroke="#666"/><path d="M5 2.500h4.500V7H5zM2.700 5h4v4.500h-4z" fill="#eee" stroke="#666"/></symbol>
<symbol id="close" viewBox="0 0 12 12"><rect x=".5" y=".5" width="11" height="11" rx="2" fill="none" stroke="#666"/><path d="M3 3l6 6M9 3l-6 6" stroke="#555" stroke-width="2"/></symbol>
</svg>

<header class="titlebar">
  <svg class="i16"><use href="#q"/></svg><span>*Projekt bez nazwy — QGIS</span>
  <div class="winctl"><svg viewBox="0 0 12 12"><path d="M1 6.500h10"/></svg><svg viewBox="0 0 12 12"><path d="M1.500 3.500h7v7h-7zM3.500 3.500v-2h7v7h-2"/></svg><svg viewBox="0 0 12 12"><path d="M1 1l10 10M11 1L1 11"/></svg></div>
</header>
<nav class="menubar"><span>Projekt</span><span><u>E</u>dycja</span><span><u>W</u>idok</span><span>W<u>a</u>rstwa</span><span><u>U</u>stawienia</span><span><u>W</u>tyczki</span><span>Wekt<u>o</u>r</span><span><u>R</u>aster</span><span><u>B</u>azy danych</span><span><u>i</u>nternet</span><span><u>S</u>iatka</span><span>Processing</span><span>Pomo<u>c</u></span></nav>

<div class="toolbar">
  <i class="grip g0"></i>
  <b><svg><use href="#new"/></svg></b><b><svg><use href="#open"/></svg></b><b><svg><use href="#save"/></svg></b><b><svg><use href="#layoutnew"/></svg></b><b><svg><use href="#layoutmgr"/></svg></b><b><svg><use href="#style"/></svg></b>
  <i class="grip"></i>
  <b class="on"><svg><use href="#hand"/></svg></b><b><svg><use href="#pan"/></svg></b><b><svg><use href="#zin"/></svg></b><b><svg><use href="#zout"/></svg></b><b><svg><use href="#zfull"/></svg></b><b><svg><use href="#zsel"/></svg></b><b><svg><use href="#zlay"/></svg></b><b class="dis"><svg><use href="#znat"/></svg></b><b><svg><use href="#zlast"/></svg></b><b class="dis"><svg><use href="#znext"/></svg></b><b><svg><use href="#map2"/></svg></b><b><svg><use href="#map3"/></svg></b><b><svg><use href="#bmark"/></svg></b><b><svg><use href="#book"/></svg></b><b><svg><use href="#clock"/></svg></b><b><svg><use href="#refresh"/></svg></b>
  <i class="grip gn"></i>
  <b><svg><use href="#selarrow"/></svg></b><s><svg><use href="#tri"/></svg></s><b><svg><use href="#selform"/></svg></b><s><svg><use href="#tri"/></svg></s><b><svg><use href="#desel"/></svg></b><s><svg><use href="#tri"/></svg></s><b><svg><use href="#selloc"/></svg></b><s><svg><use href="#tri"/></svg></s>
  <i class="grip"></i>
  <b><svg><use href="#ident"/></svg></b><b><svg><use href="#abacus"/></svg></b><b><svg><use href="#gear"/></svg></b><b><svg><use href="#sigma"/></svg></b><b><svg><use href="#table"/></svg></b><s><svg><use href="#tri"/></svg></s><b><svg><use href="#measure"/></svg></b><s><svg><use href="#tri"/></svg></s><b><svg><use href="#tip"/></svg></b><b class="dis"><svg><use href="#gearrun"/></svg></b><s class="dis"><svg><use href="#tri"/></svg></s>
</div>
<div class="toolbar t2">
  <i class="grip g0"></i>
  <b><svg><use href="#addlay"/></svg></b><b><svg><use href="#gpkgn"/></svg></b><b><svg><use href="#shpn"/></svg></b><b><svg><use href="#feathern"/></svg></b><b><svg><use href="#chipn"/></svg></b><b><svg><use href="#meshn"/></svg></b><b><svg><use href="#virtn"/></svg></b>
  <i class="grip gn"></i>
  <b class="dis menu"><svg><use href="#pencils"/></svg></b><b><svg><use href="#pencil"/></svg></b><b class="dis"><svg><use href="#saveed"/></svg></b><b class="dis"><svg><use href="#digline"/></svg></b><s class="half"><svg><use href="#tri"/></svg></s><b class="dis"><svg><use href="#blob"/></svg></b><b class="dis"><svg><use href="#tools"/></svg></b><s class="half"><svg><use href="#tri"/></svg></s><b class="dis"><svg><use href="#attred"/></svg></b><b class="dis"><svg><use href="#trash"/></svg></b><b class="dis"><svg><use href="#cut"/></svg></b><b class="dis"><svg><use href="#copy"/></svg></b><b class="dis"><svg><use href="#paste"/></svg></b><b class="dis"><svg><use href="#undo"/></svg></b><b class="dis"><svg><use href="#redo"/></svg></b>
  <i class="grip"></i>
  <b><svg><use href="#tagy"/></svg></b><b><svg><use href="#diag"/></svg></b><em class="w"></em><b><svg><use href="#tagb"/></svg></b><b><svg><use href="#tagr"/></svg></b><em></em><b class="dis"><svg><use href="#tg1"/></svg></b><b class="dis"><svg><use href="#tg2"/></svg></b><b class="dis"><svg><use href="#tg3"/></svg></b><b class="dis"><svg><use href="#tg4"/></svg></b><b class="dis"><svg><use href="#tg5"/></svg></b>
  <i class="grip gm"></i><b><svg><use href="#meta"/></svg></b><i class="grip gw"></i><b><svg><use href="#py"/></svg></b><i class="grip gn"></i><b><svg><use href="#help"/></svg></b><i class="grip"></i><b><svg><use href="#reload"/></svg></b>
</div>

<main class="work">
  <aside class="left">
    <div class="docktitle"><span>Przeglądarka</span><svg><use href="#float"/></svg><svg><use href="#close"/></svg></div>
    <div class="minibar"><svg><use href="#addb"/></svg><svg><use href="#refresh"/></svg><svg><use href="#filt"/></svg><svg><use href="#collapse"/></svg><svg><use href="#info"/></svg></div>
    <ul class="tree">
      <li><i></i><svg><use href="#star"/></svg>Ulubione</li>
      <li><i class="c"></i><svg><use href="#book"/></svg>Zakładki przestrzenne</li>
      <li><i class="c"></i><svg><use href="#home"/></svg>Katalog domowy</li>
      <li><i class="c"></i><svg><use href="#folder"/></svg>C:\</li>
      <li><i></i><svg><use href="#gpkg"/></svg>GeoPackage</li>
      <li><i></i><svg><use href="#feather"/></svg>SpatiaLite</li>
      <li><i class="c"></i><svg><use href="#pg"/></svg>PostgreSQL</li>
      <li><i></i><svg><use href="#hana"/></svg>SAP HANA</li>
      <li><i></i><svg><use href="#mssql"/></svg>MS SQL Server</li>
      <li><i></i><svg><use href="#ora"/></svg>Oracle</li>
      <li><i></i><svg><use href="#globe"/></svg>WMS/WMTS</li>
      <li><i></i><svg><use href="#cube"/></svg>Sceny</li>
      <li><i></i><svg><use href="#vtile"/></svg>Vector Tiles</li>
      <li><i class="o"></i><svg><use href="#xyz"/></svg>XYZ Tiles</li>
      <li class="sub"><i></i><svg><use href="#xyz"/></svg>Mapzen Global Terrain</li>
      <li class="sub"><i></i><svg><use href="#xyz"/></svg>OpenStreetMap</li>
      <li><i></i><svg><use href="#wcs"/></svg>WCS</li>
      <li class="wide"><i class="o"></i><svg><use href="#wfs"/></svg>WFS / OGC API - Feature</li>
      <li class="sub"><i class="c"></i><svg class="nyc"><use href="#nyc"/></svg>nyc</li>
      <li><i></i><svg><use href="#arc"/></svg>Serwery REST ArcGIS</li>
    </ul>
    <div class="hscroll lh"><i class="al"></i><span></span><i class="ar"></i></div>
    <div class="dots"></div>
    <div class="docktitle lt"><span>Warstwy</span><svg><use href="#float"/></svg><svg><use href="#close"/></svg></div>
    <div class="laybar"><b class="on"><svg><use href="#brush"/></svg></b><b><svg><use href="#addgrp"/></svg></b><b class="menu"><svg><use href="#eye"/></svg></b><b class="menu"><svg><use href="#filt"/></svg></b><b><svg><use href="#eps"/></svg></b><s><svg><use href="#tri"/></svg></s><span>»</span></div>
    <div class="layers">
      <div class="row sel"><i class="o"></i><span class="chk on"></span><svg class="ly"><use href="#poly"/></svg><strong><u>trees</u></strong></div>
      <div class="row sub r21"><span class="chk on"></span><span class="sw purple"></span>Deciduous</div>
      <div class="row sub r21"><span class="chk on"></span><span class="sw green"></span>Evergreen</div>
      <div class="row sub"><span class="chk on"></span><span class="sw red"></span>Mixed Trees</div>
      <div class="row sub"><span class="chk on"></span><span class="sw cyan"></span></div>
      <div class="row reg"><span class="chk on"></span><span class="sw gray"></span><strong>regions</strong></div>
    </div>
  </aside>
  <div class="split"></div>
  <section class="canvas">
    <svg class="map" viewBox="183 123 1425 888">
      <g transform="translate(1150 640) scale(.33333)" stroke="#2b3032" stroke-width="2.600" stroke-linejoin="round">
        <g filter="url(#ragged)">
        <path fill="#7d8b8f" d="M0 48L42 42 43 78 54 84 72 100 97 109 137 134 167 164 180 194 200 170 226 150 231 128 226 92 240 84 258 68 273 54 306 70 312 98 336 110 360 118 372 134 400 148 430 160 446 172 480 204 520 248 556 288 572 312 598 318 610 334 622 360 650 354 700 372 750 384 756 376 766 390 766 415 790 460 796 480 770 470 730 455 700 425 690 420 660 425 640 405 605 385 575 350 545 335 520 325 500 318 480 300 450 262 412 226 372 215 356 236 320 232 290 236 258 262 200 240 166 220 150 200 100 180 50 160 0 156z"/>
        <path fill="#7d8b8f" d="M262 258L300 246 350 245 368 262 380 300 400 340 430 390 452 470 438 462 420 440 400 415 370 400 378 375 355 365 345 345 300 320 270 295z"/>
        <path fill="#7d8b8f" d="M340 352l14 8 4 30-14 4zM483 490l12-6 0 14-10 3zM538 520l24 8-4 30-18-15zM510 486l8-2-4 10zM562 515l20 6-8 14-12 0z"/>
        </g>
        <g filter="url(#ragged)"><path fill="#fff" stroke="none" d="M294 114l10 4 24 46 32 54 24 6-8 12-24-4-8 12-58-4-18 18 8-28 20-16-20-28 20 10 18 22 30 6-20-46-28-46zM206 178l50 10 22 18-4 16-20-22-46-12z"/></g>
        <g filter="url(#ragged2)">
        <path fill="url(#mixed)" d="M20 136l24 0 12 14 50 10 30 26-30-4-60-22-26-6zM258 222l24-5 4 22-26 4zM292 206l30 8-4 14-24-6zM285 256l40-8 40 16 10 50 14 30-8 30-30-10-30-20-30-24-18-30zM376 216l22-2 22 30 0 20-20-10zM424 322l24 4-8 20-18 0zM764 438l28 26-8 40-14-20-14-16z"/>
        <path fill="url(#woods)" d="M358 222l40 6 36 30 24 54-28 24-18-20-26-36-20-26zM410 345l26-8 2 22-16 8zM462 268l28 10 6 20-20-6zM484 312l34 2-4 16-26-2z"/>
        <path fill="url(#woods)" d="M440 375l20-12 14 8 32 50 0 40-10 26-16-20-10-40-26-24z"/>
        <path fill="#a4d672" d="M464 350l60-6 40 18 12 26-14 14-36 0-14 20-18-14-4-34-24-10zM548 400l20-6 10 14-10 16-20-4z"/>
        <path fill="url(#woods)" d="M512 432l36-6 50 20 26 26 34 44 24 30 4 40-24 12-20-16-8 26-30-20-34-32-24-36-34-20z"/>
        <path fill="#a4d672" d="M560 460l36-4 24 20 12 28-10 26 18 40-20-6-20-30-24-24-20-24zM514 430l24-4 4 16-26 4z"/>
        <path fill="url(#woods)" d="M584 378l30 0 20 24 30 20 10 60-16 10-30-20-40-46zM664 430l30-8 24 30 14 40-6 40 4 20-30-10-30-44zM684 376l16 0-2 40-14 4zM732 462l30-6 22 18 10 14-8 44-18 22-20-14-16-36zM544 340l16 4 0 12-14-4z"/>
        <path fill="#cc7574" d="M690 442l18 0 4 20-10 12-12-16zM772 480l12 0 0 30-10 0zM400 240l14 20 4 24-12-14z"/>
        <path fill="none" stroke="#22282a" stroke-width="4" stroke-dasharray="8 5 14 4" d="M370 230l70 80M395 235l50 60M455 380l40 80M520 440l60 70 60 80M545 480l60 70M590 390l60 80M670 440l50 100M745 470l30 70M690 470l40 50M300 270l70 70M560 545l60 50M630 490l50 80"/>
        </g>
        <g filter="url(#ragged)"><path d="M540 424l26 0 60 52 50 48 14 26-26-18-44-48-42-36-38-8zM508 428l8 20-8 40-6-36zM724 440l6 30 6 40-14-36zM372 262l12 26 34 54 24 42 10 56-16-20-14-50-34-58z" fill="#fff" stroke="none"/></g>
        <g fill="none" stroke-width="2.600"><path d="M262 66l35 36 18 0M297 102l0 12M320 146l50-14M229 135l50 4 24 26-6 20 20 10 10 14M412 180l4 36-10 10M470 206l-10 46M460 246l28-10M520 310l4-24 20-6M570 285l0 30M468 266l30 12 20 0M250 155l20 30-10 15M690 370l-10 20M24 90l22 18 18-4M46 108l-8 22"/></g>
        <path d="M574 603l5 12M463 504l6 2" stroke-width="4" fill="none"/>
        <path d="M44 147l13 0-4 11-10-3z" fill="#a4d672"/>
      </g>
      <g transform="translate(170 880) scale(.33333)" fill="#7d8b8f" stroke="#2f3537" stroke-width="3" filter="url(#ragged)">
        <ellipse cx="97" cy="69" rx="11" ry="9"/><circle cx="203" cy="133" r="5"/>
        <path d="M39 110l8 10 10 8-6 2-12-8zM249 136l18 6 8 14 14 2-14 8-14 12-10-6 8-10-10-16zM277 176l30 2 18-16 8 6-8 18-20 2zM328 206l10-24 20-10 16-4 4 20 26 4 2 12-34-4-30 6zM402 170l10-4 4 10-8 12 4 14-16 2 4-16zM418 186l12 8-8 0zM430 196l20 2M462 199l20 2 50 6 4-12v22l-14-2-40-8-20-4z"/>
        <path d="M152 188l6-6M168 180l8-2M174 150l3 1M190 160l8 1M205 162l5 1M224 183l4 1M305 156l4 0M456 174l4 2M486 178l3 1M284 158l10-1M520 196l3 1" stroke-width="5"/>
      </g>
    </svg>
  </section>
  <div class="split"></div>
  <aside class="right">
    <div class="docktitle"><span>Stylizacja warstw</span><svg><use href="#float"/></svg><svg><use href="#close"/></svg></div>
    <div class="combo rc"><svg class="ly"><use href="#poly"/></svg>trees<svg class="tri"><use href="#tri"/></svg></div>
    <div class="stylebox">
      <div class="tabsv"><div class="first"><svg><use href="#brush"/></svg></div><div><svg><use href="#tagy"/></svg></div><div><svg><use href="#masks"/></svg></div><div><svg><use href="#cube3"/></svg></div><div><svg><use href="#map3p"/></svg></div><div><svg><use href="#tree3"/></svg></div><div><svg><use href="#hist"/></svg></div></div>
      <div class="vscroll v1"><i class="au"></i><span></span><i class="ad"></i></div>
      <div class="form">
        <div class="formtop">
          <div class="fields">
            <div class="cut btn uq"><svg><use href="#uniq"/></svg>Wartość unikalna</div>
            <div class="fr"><label>Wartość</label><div class="cut inp"><small>abc</small>VEGDESC</div></div>
            <div class="fr f2"><label>Symbol</label><div class="cut btn swb"><span></span></div></div>
            <div class="fr f3"><label>Paleta kolorów</label><div class="cut btn rnd">Random colors</div></div>
            <div class="stab">
              <div class="sh"><span>Symbol<svg><use href="#tri"/></svg></span><span>Wartość</span><span>Legenda</span></div>
              <div class="sr"><span><i class="chk on"></i><i class="sw purple"></i></span><span>Deciduous</span><span>Deciduous</span></div>
              <div class="sr"><span><i class="chk on"></i><i class="sw green"></i></span><span>Evergreen</span><span>Evergreen</span></div>
            </div>
          </div>
          <div class="vscroll v2"><i class="au"></i><span></span><i class="ad"></i></div>
        </div>
        <div class="hrow"><div class="hscroll rh"><i class="al"></i><span></span><i class="ar"></i></div><div class="corner"></div></div>
        <div class="actions"><div class="btn sq"><svg><use href="#undo"/></svg></div><div class="btn sq"><svg><use href="#redo"/></svg></div><span class="chk on"></span><label>Aktualizuj w locie</label><div class="btn zas">Zastosuj</div></div>
      </div>
    </div>
    <div class="tabs"><div class="act">Stylizacja warstw</div><div>Algorytmy przetwarzania</div></div>
    <div class="dots d2"></div>
    <div class="docktitle pt"><span>Podgląd wyników</span><svg><use href="#float"/></svg><svg><use href="#close"/></svg></div>
    <div class="white w1"></div><div class="dots d3"></div><div class="white w2"></div>
  </aside>
</main>

<footer class="status">
  <div class="search"><svg viewBox="0 0 14 14"><circle cx="6" cy="5.500" r="4.500"/><path d="M9 9l4 4"/></svg>Szukana fraza (Ctrl+K)</div>
  <span class="n1">Współrzędne</span><div class="in co">-1656891&nbsp; 1121546</div>
  <svg class="mid" viewBox="0 0 18 18"><path d="M2 8l4-6 3 2-4 6zM7 14l6-7 3 3-6 7z" fill="#999" stroke="#333"/><path d="M3 3l11 12M8 2l-4 12M15 2l-5 6" stroke="#444" stroke-width="1.300" fill="none"/></svg>
  <span class="skala">Skala</span><div class="in sc"><em>1:10288432</em></div><div class="in dd"><svg><use href="#tri"/></svg></div>
  <svg class="mid lock" viewBox="0 0 18 18"><path d="M5.500 8V5q0-3.500 3.500-3.500T12.500 5v3" fill="none" stroke="#777" stroke-width="1.800"/><path d="M3.500 8h11v8h-11z" fill="#555"/></svg>
  <span class="pow">Powiększenie</span><div class="in sp">100%<i></i></div>
  <span class="ob">Obrót</span><div class="in sp">0,0 °<i></i></div>
  <span class="chk on"></span><span>Renderuj</span>
  <svg class="mid" viewBox="0 0 18 18"><circle cx="9" cy="9" r="7" fill="#777"/><path d="M2 6h14M2 11h14M9 2v14M6 3q-3 6 0 12M12 3q3 6 0 12" stroke="#eee" fill="none"/></svg><span class="ep">EPSG:2964</span>
  <svg class="mid" viewBox="0 0 18 18"><circle cx="9" cy="8" r="7.500" fill="#555"/><path d="M9 14l7-4 0 7z" fill="#555"/></svg>
</footer>

<div class="taskbar">
  <svg class="start" viewBox="0 0 16 16"><path d="M0 2.200L7 1.200v6.300H0zM8 1l8-1v7.500H8zM0 8.500h7v6.300l-7-1zM8 8.500h8V16l-8-1.100z"/></svg>
  <div class="tsearch"><svg viewBox="0 0 20 20"><circle cx="12.500" cy="7.500" r="6.500"/><path d="M8 12l-7 7"/></svg>Wyszukaj</div>
  <svg class="tview" viewBox="0 0 16 16"><path d="M.5 4.500h10v7H.5zM.5 0v2.500h10V0M.5 16v-2.500h10V16M14 0v3.500M14 9v7" fill="none" stroke="#111"/><path d="M12.500 5h3v3h-3z"/></svg>
  <div class="app"><svg viewBox="0 0 24 24"><path d="M1 3h9l2 2h11v16H1z" fill="#e8a912"/><path d="M1 6h22v15H1z" fill="#ffd35c"/><path d="M5 12h14v9h-4v-4H9v4H5z" fill="#3a94dc"/></svg></div>
  <div class="app"><svg viewBox="0 0 24 24"><circle cx="11" cy="11" r="11" fill="#2f9e4b"/><path d="M11 11L1.500 5.500A11 11 0 0 1 20.500 5.500z" fill="#e33b2e"/><path d="M11 11l9.500-5.500A11 11 0 0 1 11 22z" fill="#fccb2c"/><circle cx="11" cy="11" r="5.300" fill="#fff"/><circle cx="11" cy="11" r="4.200" fill="#3a7de8"/><circle cx="18" cy="17.500" r="6.500" fill="#b8330e"/><text x="14.500" y="20.500" font-size="8.500" font-family="Open Sans" fill="#fff">M</text></svg></div>
  <div class="app"><svg viewBox="0 0 24 24"><circle cx="11.500" cy="11.500" r="11.500" fill="#5865f2"/><path d="M6 7q6-2 11 0 3 5 2 9-5 3-7-1-3 4-7 1-2-3 1-9z" fill="#fff"/><circle cx="9" cy="12" r="1.500" fill="#5865f2"/><circle cx="18" cy="17.500" r="6.300" fill="#f04a55"/><text x="12.800" y="20.800" font-size="8.500" font-weight="700" font-family="Open Sans" fill="#fff">9+</text></svg></div>
  <div class="app cur"><svg><use href="#q"/></svg></div>
  <div class="app"><svg viewBox="0 0 24 24"><circle cx="12" cy="12" r="11.500" fill="#e8825a"/><path d="M.5 12a11.500 11.500 0 0 0 23 0z" fill="#8a5fc8"/><circle cx="12" cy="12" r="9.500" fill="#2c2c2c"/><path d="M9 7l8 5-8 5z" fill="#fff"/></svg></div>
  <div class="tray">
    <svg class="wx" viewBox="0 0 26 26"><path d="M1 15q0-5 5-6 1-7 8-7 6 0 7 6 4 1 4 7-2 3-5 3H5q-4 0-4-3z" fill="#9fb4d0"/><path d="M1 20.500h24M4 24.500h18" stroke="#5b80b4" stroke-width="1.800"/><circle cx="19" cy="6.500" r="6" fill="#c42b1c"/><text x="16.500" y="10" font-size="9" font-family="Open Sans" fill="#fff">1</text></svg>
    <span class="temp">-1°C&nbsp; Mgła</span>
    <svg viewBox="0 0 16 16"><path d="M2 11l6-6 6 6" fill="none" stroke="#111" stroke-width="1.300"/></svg>
    <svg viewBox="0 0 16 16"><rect x="5" y="0" width="6" height="11" rx="2.500"/><path d="M3 8q0 5 5 5t5-5M8 13v3M5 15.500h6" fill="none" stroke="#111"/></svg>
    <svg viewBox="0 0 16 16"><path d="M4 4h7v9H4zM11 7l3-2v7l-3-2M5 2q2.500-2 5 0M5 15q2.500 1.500 5 0" fill="none" stroke="#111" stroke-width="1.100"/></svg>
    <svg viewBox="0 0 16 16"><path d="M1 3l13-2v12L1 14zM4 7q4-4 7-1M5 10q2 2 4 0" fill="none" stroke="#111" stroke-width="1.200"/><circle cx="12.500" cy="12.500" r="3.500" fill="#ff9000"/></svg>
    <svg viewBox="0 0 16 16"><path d="M1 6h2l3-3v10l-3-3H1zM8.500 5.500q2 2.500 0 5M11 4q3 4 0 8M13.300 2.500q4 5.500 0 11" fill="none" stroke="#111"/></svg>
    <div class="clk"><span>20:27</span><span>01.12.2024</span></div>
    <svg class="nt" viewBox="0 0 30 30"><path d="M2 3h18v14H10l-4 5v-5H2z"/><path d="M5 7h12M5 10h12M5 13h8" stroke="#ddd"/><circle cx="21" cy="20" r="8.500" fill="#d0cdca" stroke="#555"/><text x="18" y="24.500" font-size="12" font-family="Open Sans">1</text></svg>
    <i class="show"></i>
  </div>
</div>

<div class="dialog">
  <div class="dt"><svg class="i16"><use href="#q"/></svg><span>Group Stats</span><div class="winctl dk"><svg viewBox="0 0 12 12"><path d="M1 6.500h10"/></svg><svg viewBox="0 0 12 12"><path d="M1.500 1.500h9v9h-9z"/></svg><svg viewBox="0 0 12 12"><path d="M1 1l10 10M11 1L1 11"/></svg></div></div>
  <div class="dm"><span><u>D</u>ata</span><span>Feat<u>u</u>res</span><span>W<u>i</u>ndow</span><span>He<u>l</u>p</span></div>
  <div class="dbody">
    <div class="result">
      <div class="th"><span>1<i class="up"></i></span><span>2</span></div>
      <div class="rows">
        <div class="rhd"><span class="two">1<br>-</span><span>2</span><span>3</span><span>4</span></div>
        <div class="grid"><span class="pk"><strong>VEGDESC</strong></span><span class="pk"></span><span class="pk">Deciduous</span><span class="num">165378</span><span class="pk">Evergreen</span><span class="num">164579</span><span class="pk mt">Mixed Trees</span><span class="num">189273</span></div>
      </div>
    </div>
    <div class="vgrip"></div>
    <div class="cp">
      <div class="docktitle ct"><span>Control panel</span><svg><use href="#float"/></svg><svg><use href="#close"/></svg></div>
      <div class="cpin">
        <p class="l1">Layers</p>
        <div class="combo cc">trees<svg class="tri"><use href="#tri"/></svg></div>
        <p class="l2">Fields</p>
        <div class="flist">
          <ul><li><svg><use href="#pie"/></svg>AREA_KM2</li><li><svg><use href="#pie"/></svg>cat</li><li><svg><use href="#doc"/></svg>F_CODE</li><li><svg><use href="#doc"/></svg>F_CODEDESC</li><li><svg><use href="#pie"/></svg>VEG_ID</li><li class="s"><svg><use href="#doc"/></svg>VEGDESC</li><li><svg><use href="#earth"/></svg>Area</li><li><svg><use href="#earth"/></svg>Perimeter</li><li><svg><use href="#bars"/></svg>average</li><li><svg><use href="#bars"/></svg>count</li><li><svg><use href="#bars"/></svg>max</li><li><svg><use href="#bars"/></svg>median</li></ul>
          <div class="vscroll v3"><i class="au"></i><span></span><i class="ad"></i></div>
        </div>
        <div class="two-col h1"><div><div class="btn flt">Filter</div></div><div>Columns</div></div>
        <div class="two-col"><div class="box"></div><div class="box"></div></div>
        <div class="two-col h2"><div>Rows</div><div class="val"><span>Value</span><span class="chk"></span><label>use NULL values</label></div></div>
        <div class="two-col"><ul class="box"><li><svg><use href="#doc"/></svg>VEGDESC</li></ul><ul class="box"><li><svg><use href="#pie"/></svg>AREA_KM2</li><li><svg><use href="#bars"/></svg>sum</li></ul></div>
        <div class="useonly"><span class="chk"></span><label>Use only selected features</label><div class="btn clr">Clear</div></div>
        <div class="btn calc">Calculate</div>
      </div>
    </div>
  </div>
  <div class="dstat"><span>Calculate... 100% |&nbsp; generate view...100% |&nbsp; done.</span><i class="sizegrip"></i></div>
</div>
<div class="watermark"><p>Aktywuj system Windows</p><span>Przejdź do ustawień, aby aktywować system Windows.</span></div>
</body>
</html>
```
FILE: styles.css
```css
* { box-sizing: border-box; margin: 0; padding: 0; }
html, body { width: 1920px; height: 1080px; overflow: hidden; }
body { display: flex; flex-direction: column; position: relative; background: #f0f0f0; color: #000; font: 11.4px/16px "Open Sans", "Noto Sans", sans-serif; }
ul { list-style: none; }
svg { display: block; flex: none; }
i, em { font-style: normal; }
s, b { text-decoration: none; font-weight: 400; }
u { text-underline-offset: 1.5px; }
.defs { width: 0; height: 0; position: absolute; }
.symbols { display: none; }
.i16 { width: 16px; height: 16px; }

.titlebar { height: 23px; background: #fff; display: flex; align-items: center; padding-left: 2px; gap: 5px; color: #808080; flex: none; }
.titlebar span { letter-spacing: -.05px; }
.winctl { margin-left: auto; display: flex; gap: 34px; padding-right: 19px; }
.winctl svg { width: 12px; height: 12px; fill: none; stroke: #888; }
.winctl.dk svg { stroke: #111; }
.menubar { height: 20px; flex: none; display: flex; align-items: center; padding: 2px 0 0 11px; gap: 15px; color: #8a8a8a; font-size: 11.3px; border-bottom: 1px solid #d9d9d9; }

.toolbar { height: 40px; flex: none; display: flex; align-items: center; background: linear-gradient(#fafafa, #efefef); border-bottom: 1px solid #b5b5b5; }
.toolbar b { width: 33.4px; height: 32px; display: flex; align-items: center; justify-content: center; flex: none; position: relative; }
.toolbar b svg { width: 24px; height: 24px; }
.toolbar b.on { border: 1px solid #a8a8a8; background: #dadada; border-radius: 2px; width: 32px; margin-left: 1px; }
.toolbar s { width: 12.100px; display: flex; justify-content: center; flex: none; }
.toolbar s svg { width: 8px; height: 5px; }
.dis { opacity: .36; }
.dis svg { filter: grayscale(.75); }
.half { opacity: .8; }
.grip { width: 16px; height: 22px; flex: none; background: radial-gradient(circle, #aaa 0.6px, transparent 0.9px) 6px 0/3px 3px repeat; background-clip: content-box; padding: 0 5px; }
.grip.g0 { width: 12.300px; padding: 0 4px 0 4px; }
.grip.gw { width: 17.500px; padding: 0 6px; }
.grip.gn { width: 15px; }
.grip.gm { width: 17px; }
.t2 em { width: 1px; height: 24px; background: #ccc; margin: 0 2.500px; }
.t2 em.w { margin: 0 3px; }

.work { flex: 1; display: flex; min-height: 0; }
.left { width: 175px; flex: none; display: flex; flex-direction: column; border-bottom: 1px solid #b5b5b5; }
.split { width: 8px; flex: none; }
.canvas { flex: 1; min-width: 0; background: #fff; border-bottom: 1px solid #b5b5b5; overflow: hidden; }
.map { width: 1425px; height: 888px; }
.watermark { position: absolute; left: 1484px; top: 945px; color: #a3a3a3; white-space: nowrap; }
.watermark p { font-size: 18.6px; line-height: 26px; }
.watermark span { font-size: 14px; line-height: 20px; }
.right { width: 304px; flex: none; display: flex; flex-direction: column; }

.docktitle { height: 22px; display: flex; align-items: center; padding: 0 1px 0 4px; flex: none; }
.docktitle span { flex: 1; }
.docktitle svg { width: 11px; height: 11px; margin-left: 3px; }
.right .docktitle { padding-left: 2px; padding-right: 2px; }
.left > .docktitle:first-child { font-size: 11.6px; }
.minibar { height: 29px; display: flex; align-items: center; padding: 0 0 5px 8px; gap: 9.300px; flex: none; }
.minibar svg { width: 16px; height: 16px; }
.tree { height: 464px; flex: none; background: #fff; border-left: 1px solid #b5b5b5; border-top: 1px solid #ccc; overflow: hidden; font-size: 11.5px; padding-top: .7px; }
.tree li { height: 18.180px; display: flex; align-items: center; white-space: nowrap; }
.tree li.wide { letter-spacing: .15px; }
.tree i { width: 19px; height: 16px; flex: none; position: relative; }
.tree svg { width: 16px; height: 16px; margin-right: 6px; }
.tree svg.nyc { width: 14px; margin: 0 7px 0 1px; }
.tree .sub { padding-left: 16.500px; }
.tree i.c::before { content: ""; position: absolute; left: 6px; top: 4px; border: 4px solid transparent; border-left: 5px solid #606060; border-right: 0; }
.tree .sub i.c::before { left: 5px; }
.tree i.o::before, .row i.o::before, .up::before { content: ""; position: absolute; left: 4px; top: 6px; border: 4px solid transparent; border-top: 5px solid #606060; border-bottom: 0; }
.hscroll { display: flex; background: #e2e2e2; border: 1px solid #c2c2c2; flex: none; }
.hscroll i { width: 14px; background: #f8f8f8; display: flex; align-items: center; justify-content: center; }
.hscroll i::before, .vscroll i::before { content: ""; border: 4px solid transparent; }
.al::before { border-right: 5px solid #4a4a4a !important; border-left: 0 !important; }
.ar::before { border-left: 5px solid #4a4a4a !important; border-right: 0 !important; }
.au::before { border-bottom: 5px solid #4a4a4a !important; border-top: 0 !important; }
.ad::before { border-top: 5px solid #4a4a4a !important; border-bottom: 0 !important; }
.hscroll span { background: linear-gradient(#fff, #f0f0f0); border: 1px solid #c2c2c2; border-width: 0 1px; }
.lh { height: 15px; border-right: 0; }
.lh span { width: 139px; }
.lh .ar { margin-left: auto; border-left: 1px solid #c2c2c2; }
.dots { height: 8px; flex: none; background: radial-gradient(circle, #999 .6px, transparent .9px) 0 50%/3px 3px repeat-x; width: 17px; align-self: center; }
.lt { height: 20px; }
.laybar { height: 31px; flex: none; display: flex; align-items: center; padding: 0 0 2px 4px; border-bottom: 1px solid #b5b5b5; }
.laybar b { width: 26px; height: 24px; display: flex; align-items: center; justify-content: center; position: relative; }
.laybar b.on { border: 1px solid #a8a8a8; background: #dadada; border-radius: 2px; width: 24px; margin-right: 1px; }
.laybar svg { width: 16px; height: 16px; }
.menu::after { content: ""; position: absolute; right: 1px; bottom: 3px; border: 3px solid transparent; border-top: 3px solid #555; border-bottom: 0; }
.laybar s svg { width: 8px; height: 5px; margin-left: 0; }
.laybar span { margin-left: auto; padding-right: 3px; font-size: 17px; color: #444; }
.layers { flex: 1; background: #fff; border-left: 1px solid #b5b5b5; padding-top: 0; }
.row { height: 20px; display: flex; align-items: center; font-size: 11.4px; }
.row.sel { height: 18px; background: #f0f0f0; padding-top: 1px; }
.row.sel i { width: 23px; height: 16px; position: relative; }
.row.sel i::before { left: 6px; top: 4px; }
.row .ly { width: 18px; height: 13px; margin: 0 6px 2px 5px; }
.row strong { font-size: 11.5px; }
.row.sub { padding-left: 43px; }
.row.r21 { height: 20.900px; }
.chk { width: 15px; height: 15px; border: 1px solid #b4b4b4; outline: 1px solid #e4e4e4; outline-offset: -2px; background: #fff; flex: none; display: block; position: relative; }
.chk.on::after { content: ""; position: absolute; left: 4px; top: 0; width: 4px; height: 8px; border: solid #000; border-width: 0 2px 2px 0; transform: rotate(40deg) skewY(8deg); }
.sw { width: 18px; height: 18px; border: 1px solid; margin: 0 6px; flex: none; display: block; }
.purple { background: #a06fdb; border-color: #7450a0; }
.green { background: #a8d577; border-color: #77985a; }
.red { background: #cb7979; border-color: #915555; }
.cyan { background: #60f1ef; border-color: #44acaa; }
.gray { background: #7d8b8f; border-color: #596366; }
.row.reg { padding-left: 23px; height: 19px; }
.row.reg .sw { margin-left: 5px; width: 17px; height: 16px; }

.combo, .btn, .inp { border: 1px solid #a9a9a9; border-radius: 2px; background: linear-gradient(#fdfdfd, #ececec); display: flex; align-items: center; flex: none; }
.btn { justify-content: center; }
.combo .tri { width: 8px; height: 5px; margin-left: auto; margin-right: 7px; }
.right .docktitle:first-child { height: 21px; padding-top: 0; }
.rc { height: 24px; margin: 1px 4px 7px 2px; padding: 1px 0 0 4px; }
.rc .tri { margin-right: 6px; }
.rc .ly { width: 17px; height: 13px; margin: 0 2px 3px 1px; }
.stylebox { height: 223px; flex: none; display: flex; padding-left: 2px; margin-bottom: 3px; }
.tabsv { width: 24px; height: 223px; background: #595959; overflow: hidden; display: grid; grid-template-rows: 32px repeat(6, 31.800px); }
.tabsv div { display: flex; align-items: center; padding-left: 4px; }
.tabsv svg { width: 22px; height: 22px; }
.tabsv .first { background: #f0f0f0; padding-left: 6px; }
.vscroll { display: flex; flex-direction: column; background: #e2e2e2; flex: none; }
.vscroll i { height: 14px; background: #f8f8f8; display: flex; align-items: center; justify-content: center; }
.vscroll i.ad { margin-top: auto; border-top: 1px solid #c2c2c2; }
.vscroll span { background: linear-gradient(90deg, #fff, #f2f2f2); border: 1px solid #c2c2c2; border-width: 1px 0; }
.v1 { width: 14px; }
.v1 span { height: 168px; }
.form { margin-left: 3px; width: 258px; }
.formtop { display: flex; height: 179px; padding-top: 6px; }
.fields { width: 244px; height: 173px; overflow: hidden; flex: none; }
.cut { border-right: 0; border-radius: 2px 0 0 2px; }
.uq { height: 24px; justify-content: flex-start; padding-left: 6px; margin-bottom: 6px; letter-spacing: -.5px; }
.uq svg { width: 15px; height: 15px; margin-right: 3px; }
.fr { display: grid; grid-template-columns: 78px 1fr; align-items: center; height: 24px; }
.fr label { white-space: nowrap; letter-spacing: -.25px; }
.fr .inp { background: #fff; height: 24px; padding: 1px 0 0 4px; letter-spacing: -.25px; }
.fr small { font-size: 9px; font-weight: 700; color: #666; margin: -2px 4px 0 0; }
.f2 { height: 27px; margin: 6px 0 7px; }
.swb { height: 27px; padding: 3px 0 3px 4px; }
.swb span { flex: 1; height: 21px; background: #beb297; border: 1px solid #857d69; border-right: 0; }
.f3 { height: 22px; margin-bottom: 7px; }
.rnd { height: 22px; justify-content: flex-end; padding-right: 6px; letter-spacing: -.45px; }
.stab { background: #fff; border-left: 1px solid #b5b5b5; }
.sh, .sr { display: grid; grid-template-columns: 69px 128px 60px; align-items: center; height: 18px; }
.sh { height: 20px; background: linear-gradient(#fff, #f0f0f0); border-bottom: 1px solid #b5b5b5; font-size: 11.6px; }
.sh span { border-right: 1px solid #ccc; height: 20px; display: flex; align-items: center; padding: 2px 0 0 2px; }
.sh svg { width: 8px; height: 5px; margin: -6px 3px 0 auto; }
.sr span { padding-left: 4px; display: flex; align-items: center; }
.sr span:first-child { padding-left: 2px; }
.sr .chk { width: 14px; height: 14px; }
.sr .sw { width: 17px; height: 16px; }
.v2 { width: 14px; }
.v2 i { height: 13px; }
.v2 span { height: 102px; }
.hrow { display: flex; height: 15px; }
.rh { width: 244px; border-color: #d6d6d6; }
.rh span { width: 155px; }
.rh .ar { margin-left: auto; }
.corner { width: 14px; border: 1px solid #c2c2c2; background: #f0f0f0; }
.actions { display: flex; align-items: center; margin-top: 6px; height: 23px; letter-spacing: -.35px; }
.sq { width: 24px; height: 23px; margin-right: 6px; }
.sq svg { width: 15px; height: 15px; }
.actions label { margin-left: 5px; width: 97px; white-space: nowrap; }
.zas { width: 81px; height: 22px; }
.tabs { display: flex; border-top: 1px solid #b5b5b5; height: 24px; flex: none; }
.tabs div { height: 21px; width: 145px; background: #dcdcdc; border: 1px solid #b5b5b5; border-top: 0; display: flex; justify-content: center; align-items: center; letter-spacing: -.5px; padding-top: 1px; }
.tabs .act { width: 108px; height: 24px; background: #f8f8f8; letter-spacing: -.3px; padding: 0 2px 0 0; }
.d2 { height: 8px; }
.pt { height: 18px; }
.white { background: #fff; border: 1px solid #b5b5b5; border-right-color: #ddd; border-left-color: #eee; flex: none; }
.w1 { height: 279px; }
.d3 { height: 3px; }
.w2 { flex: 1; }

.status { height: 29px; flex: none; display: grid; align-items: center; padding-left: 4px; grid-template-columns: 202px 937px 111px 24px 39px 60px 21px 34px 68px 85px 46px 85px 6px 14px 64px 19px 68px 33px; white-space: nowrap; font-size: 11.2px; }
.search, .in { height: 22px; border: 1px solid #a9a9a9; border-radius: 2px; background: #fff; display: flex; align-items: center; padding: 1px 0 0 5px; }
.search { color: #7b7b7b; padding-left: 8px; }
.search svg { width: 13px; height: 13px; margin-right: 7px; fill: none; stroke: #888; stroke-width: 1.400; }
.in.co { margin-left: -1px; font-size: 11px; letter-spacing: -.1px; padding-left: 6px; }
.in.sc { padding-left: 1px; overflow: hidden; justify-content: flex-end; border-radius: 2px 0 0 2px; letter-spacing: -.3px; }
.in.dd { background: #f5f5f5; padding: 0; justify-content: center; border-left: 0; }
.in.dd svg { width: 8px; height: 5px; }
.status .mid { width: 18px; height: 18px; justify-self: center; }
.status .lock { margin-left: 4px; }
.status > span { padding-top: 1px; }
.status > .n1 { text-align: right; padding-right: 3px; letter-spacing: -.3px; }
.status > .skala { padding-left: 9px; letter-spacing: -.3px; }
.status > .pow { letter-spacing: -.45px; }
.status > .ob { padding-left: 9px; letter-spacing: -.2px; }
.status > .ep { letter-spacing: -.25px; }
.sp { position: relative; }
.sp i { margin: -1px 0 0 auto; width: 15px; height: 20px; border-left: 1px solid #ccc; background: #f5f5f5; display: flex; flex-direction: column; align-items: center; justify-content: center; gap: 4px; }
.sp i::before { content: ""; border: 3.500px solid transparent; border-bottom: 5px solid #555; border-top: 0; }
.sp i::after { content: ""; border: 3.500px solid transparent; border-top: 5px solid #555; border-bottom: 0; }
.status > .chk { grid-column: 14; padding: 0; width: 14px; height: 14px; }
.status > .chk + span { padding-left: 5px; letter-spacing: -.3px; }

.taskbar { height: 40px; flex: none; display: flex; align-items: center; background: linear-gradient(90deg, #dfdcd5 0, #e5e2d9 340px, #e6e2da 640px, #ecdfd0 900px, #efe3cf 1040px, #efeac4 1110px, #e8dfd2 1190px, #dcd8d3 1300px, #dedad6 1480px, #eadfd1 1530px, #e0dcd7 1580px, #dcdad8 1680px, #e8e0d2 1750px, #dadade 1920px); }
.start { width: 16px; height: 16px; margin: 0 17px 0 16px; }
.tsearch { width: 291px; height: 40px; background: #fff; border: 1px solid #c5c5c5; display: flex; align-items: center; font-size: 14.2px; padding-left: 12px; }
.tsearch svg { width: 20px; height: 20px; fill: none; stroke: #111; stroke-width: 1.400; margin-right: 13px; }
.tview { width: 16px; height: 16px; margin: 0 24px 0 16px; }
.app { width: 40px; height: 40px; margin-right: 9px; border-bottom: 2px solid #0078d7; display: flex; align-items: center; justify-content: center; }
.app svg { width: 24px; height: 24px; }
.app.cur { width: 48px; background: #f6f4ee; margin: 0 5px 0 -4px; }
.tray { margin-left: auto; display: flex; align-items: center; font-size: 14.2px; }
.tray svg { width: 16px; height: 16px; margin-right: 8px; }
.tray .wx { width: 25px; height: 26px; margin-right: 8px; }
.temp { width: 90px; white-space: nowrap; }
.clk { width: 68px; margin-left: -5px; display: flex; flex-direction: column; text-align: center; font-size: 11.2px; line-height: 18px; letter-spacing: -.2px; }
.tray .nt { width: 30px; height: 30px; margin: 4px 11px 0 7px; }
.show { width: 4px; height: 40px; border-left: 1px solid #aaa; }

.dialog { position: absolute; left: 348px; top: 230px; width: 810px; height: 752px; background: #f0f0f0; border: 1px solid #6a6a6a; box-shadow: 0 6px 20px rgba(0,0,0,.38); display: flex; flex-direction: column; }
.dt { height: 30px; background: #fff; display: flex; align-items: center; gap: 5px; padding-left: 8px; flex: none; }
.dt span { letter-spacing: -.1px; }
.dt .winctl { padding-right: 17px; }
.dm { height: 21px; display: flex; align-items: center; gap: 15px; padding: 1px 0 0 10px; border-bottom: 1px solid #d9d9d9; flex: none; font-size: 11.3px; }
.dbody { flex: 1; display: flex; min-height: 0; }
.result { margin: 9px 0 0 9px; width: 479px; height: 659px; border: 1px solid #b5b5b5; background: #fff; display: flex; flex-direction: column; flex: none; }
.th { height: 21px; background: #f0f0f0; display: flex; flex: none; }
.th span { width: 81px; height: 20px; background: linear-gradient(#fdfdfd, #ececec); border: 1px solid #a9a9a9; border-width: 0 1px 1px 0; display: flex; justify-content: center; align-items: center; position: relative; font-size: 11.6px; padding-top: 2px; }
.th span + span { width: 47px; border-right: 0; }
.up::before { left: 69px; top: 7px; border: 4px solid transparent; border-bottom: 5px solid #505050; border-top: 0; }
.rows { flex: 1; display: flex; }
.rhd { width: 11px; background: #f0f0f0; border-right: 1px solid #ccc; }
.rhd span { display: flex; height: 30.300px; align-items: center; justify-content: center; border: 1px solid #a9a9a9; border-width: 0 1px 1px 0; width: 11px; background: linear-gradient(#fdfdfd, #ececec); line-height: 12px; padding-top: 2px; }
.rhd .two { display: block; height: 29px; padding: 5px 0 0 2px; line-height: 10px; }
.grid { display: grid; grid-template-columns: 70px 47px; grid-template-rows: 29px repeat(3, 30.300px); }
.grid span { border: 1px solid #c0c0c0; border-width: 0 1px 1px 0; display: flex; align-items: center; padding: 2px 0 0 3px; white-space: nowrap; }
.grid .mt { letter-spacing: -.1px; }
.pk { background: #f5eaea; }
.grid .num { padding-left: 4.500px; }
.vgrip { width: 15px; flex: none; background: radial-gradient(circle, #aaa .6px, transparent .9px) 50% 0/3px 3px repeat-y content-box; padding: 332px 0 319px 10px; }
.cp { flex: 1; }
.ct { height: 22px; padding-right: 2px; }
.cpin { padding-left: 9px; width: 296px; }
.l1 { padding-top: 6px; height: 27px; }
.cc { height: 22px; padding-left: 4px; width: 287px; letter-spacing: -.1px; }
.l2 { height: 26px; padding-top: 5px; }
.flist { width: 287px; height: 307px; border: 1px solid #b5b5b5; background: #fff; display: flex; }
.flist ul { flex: 1; padding-top: 1px; overflow: hidden; }
.cp li { height: 26.300px; display: flex; align-items: center; padding-left: 4px; flex: none; }
.cp li svg { width: 23px; height: 23px; margin-right: 7px; }
.cp li.s { background: #f0f0f0; }
.v3 { width: 14px; border-left: 1px solid #c2c2c2; }
.v3 i { height: 13px; }
.v3 span { height: 181px; }
.two-col { display: grid; grid-template-columns: 140px 140px; column-gap: 7px; align-items: center; }
.h1 { height: 34px; letter-spacing: -.1px; }
.flt { width: 39px; height: 22px; }
.box { height: 70px; background: #fff; border: 1px solid #b5b5b5; border-top-color: #eee; }
.box:first-child { border-right-color: #eee; }
ul.box { border-bottom-color: #ddd; }
.box li { padding-left: 4px; }
.box:last-child li svg { margin-right: 6px; }
.h2 { height: 33px; }
.val { display: flex; align-items: center; white-space: nowrap; letter-spacing: -.1px; }
.val label { letter-spacing: -.5px; }
.val .chk { margin: 0 4px 0 5px; }
.useonly { display: flex; align-items: center; height: 36px; width: 287px; letter-spacing: -.4px; }
.useonly .chk { margin-right: 4px; }
.clr { width: 81px; height: 22px; margin-left: auto; letter-spacing: -.1px; }
.calc { width: 287px; height: 22px; margin-top: -1px; letter-spacing: -.3px; }
.dstat { height: 21px; padding: 3px 5px 0 6px; flex: none; letter-spacing: -.1px; display: flex; justify-content: space-between; }
.sizegrip { width: 9px; height: 9px; margin-top: 6px; background: radial-gradient(circle, #999 .6px, transparent .9px) 0 0/3px 3px; clip-path: polygon(100% 0, 100% 100%, 0 100%); }
```
